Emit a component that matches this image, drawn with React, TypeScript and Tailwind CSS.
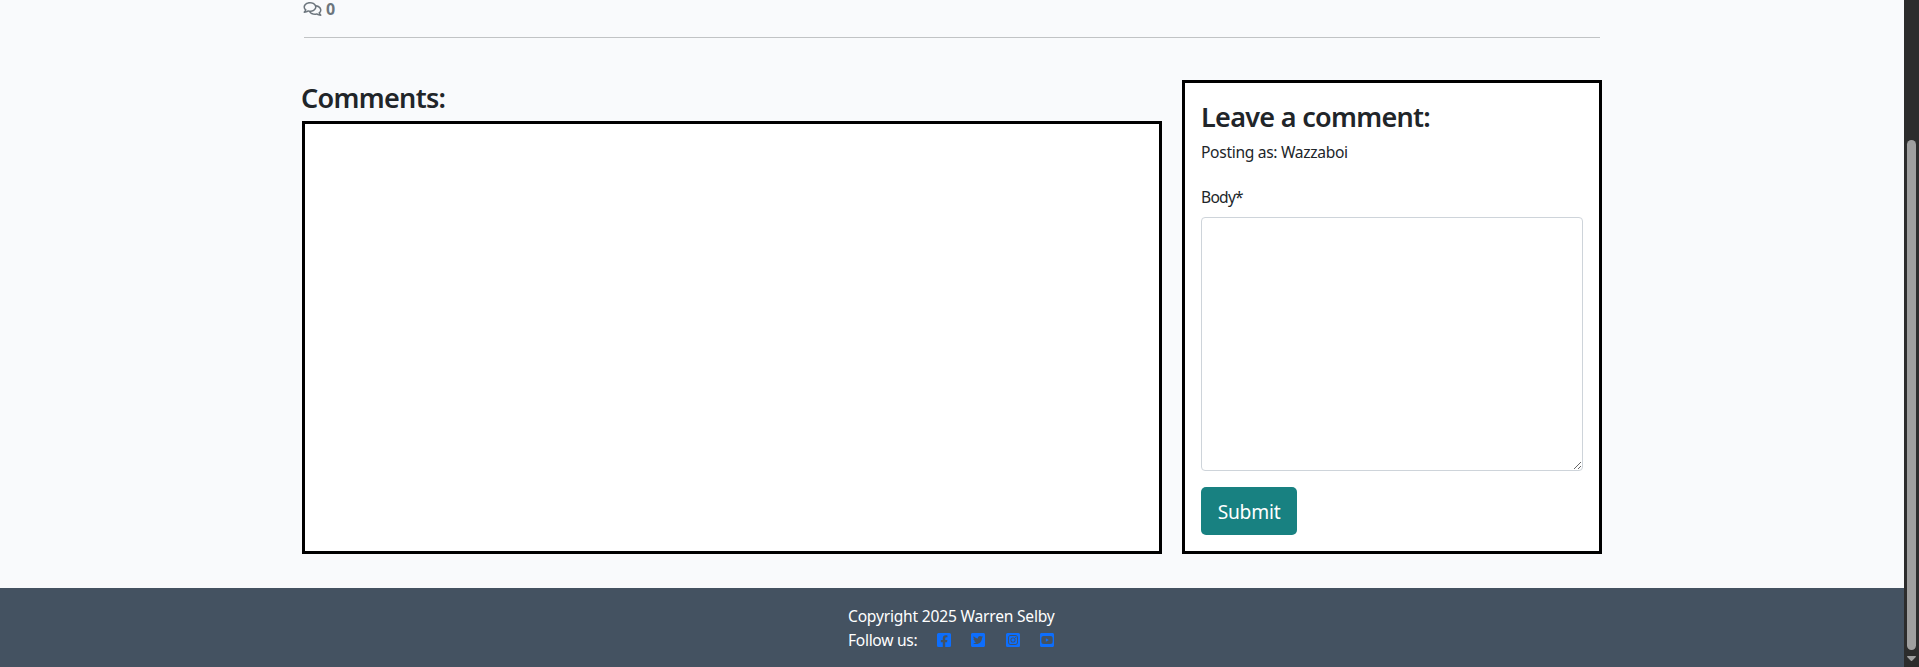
import { FaRegComments, FaFacebookSquare, FaTwitterSquare, FaInstagramSquare, FaYoutubeSquare } from 'react-icons/fa';

const socials = [
  { name: 'Facebook', Icon: FaFacebookSquare },
  { name: 'Twitter', Icon: FaTwitterSquare },
  { name: 'Instagram', Icon: FaInstagramSquare },
  { name: 'YouTube', Icon: FaYoutubeSquare },
];

function Scrollbar() {
  return (
    <div className="flex w-[15px] shrink-0 flex-col items-center bg-[#2c2c2c] pt-[140px]">
      <div className="h-[510px] w-[9px] rounded-full bg-[#9f9f9f]" />
      <svg className="mt-[6px] block" width="9" height="5" viewBox="0 0 9 5">
        <path d="M0.2 0h8.6v1L4.9 5h-.8L.2 1z" fill="#9f9f9f" />
      </svg>
    </div>
  );
}

export default function App() {
  return (
    <div className="flex h-[667px] overflow-hidden bg-[#f9fafc] font-['Noto_Sans','Open_Sans',sans-serif] text-[15.6px] leading-6 tracking-[-0.21px] text-[#212529]">
      <div className="flex min-w-0 flex-1 flex-col">
        <main className="mx-auto flex w-[1300px] flex-1 flex-col">
          <div className="mx-0.5 flex h-[38px] items-start border-b border-[#c1c3c5] text-[#6c757d]">
            <div className="flex h-[18px] items-center leading-[18px]">
              <FaRegComments className="-ml-px h-4 w-[19px]" />
              <strong className="ml-1 text-[16px] font-bold">0</strong>
            </div>
          </div>

          <div className="mt-[42px] flex h-[474px] gap-5">
            <section className="flex w-[860px] flex-col">
              <h3 className="-ml-px h-[41px] pt-px text-[27px] font-semibold leading-[34px] tracking-[-0.68px]">Comments:</h3>
              <div className="flex-1 border-[3px] border-black bg-white" />
            </section>

            <section className="flex w-[420px] flex-col border-[3px] border-black bg-white px-4 pt-[17px]">
              <h3 className="h-10 text-[27px] font-semibold leading-[34px] tracking-[-0.7px]">Leave a comment:</h3>
              <p className="tracking-[-0.32px]">Posting as: Wazzaboi</p>
              <form className="mt-[21px] flex flex-col items-start" onSubmit={(e) => e.preventDefault()}>
                <label htmlFor="body" className="mb-2 tracking-[-0.75px]">Body*</label>
                <textarea
                  id="body"
                  className="block h-[254px] w-[382px] resize rounded border border-[#ced4da] bg-white px-3 py-1.5 outline-none"
                />
                <button type="submit" className="mt-4 h-12 w-24 rounded-[5px] bg-[#188181] pt-px text-[19.2px] leading-[30px] text-white">
                  Submit
                </button>
              </form>
            </section>
          </div>
        </main>

        <footer className="flex h-[79px] justify-center bg-[#445261] pt-4 text-white">
          <div className="w-[208px]">
            <p className="whitespace-nowrap">Copyright 2025 Warren Selby</p>
            <div className="flex items-center">
              <span className="w-[89px] shrink-0 tracking-[-0.3px]">Follow us:</span>
              <div className="flex gap-[20.4px] text-[#0d6efd]">
                {socials.map(({ name, Icon }) => (
                  <a key={name} href="#" aria-label={name}>
                    <Icon className="h-4 w-[14px]" />
                  </a>
                ))}
              </div>
            </div>
          </div>
        </footer>
      </div>
      <Scrollbar />
    </div>
  );
}
